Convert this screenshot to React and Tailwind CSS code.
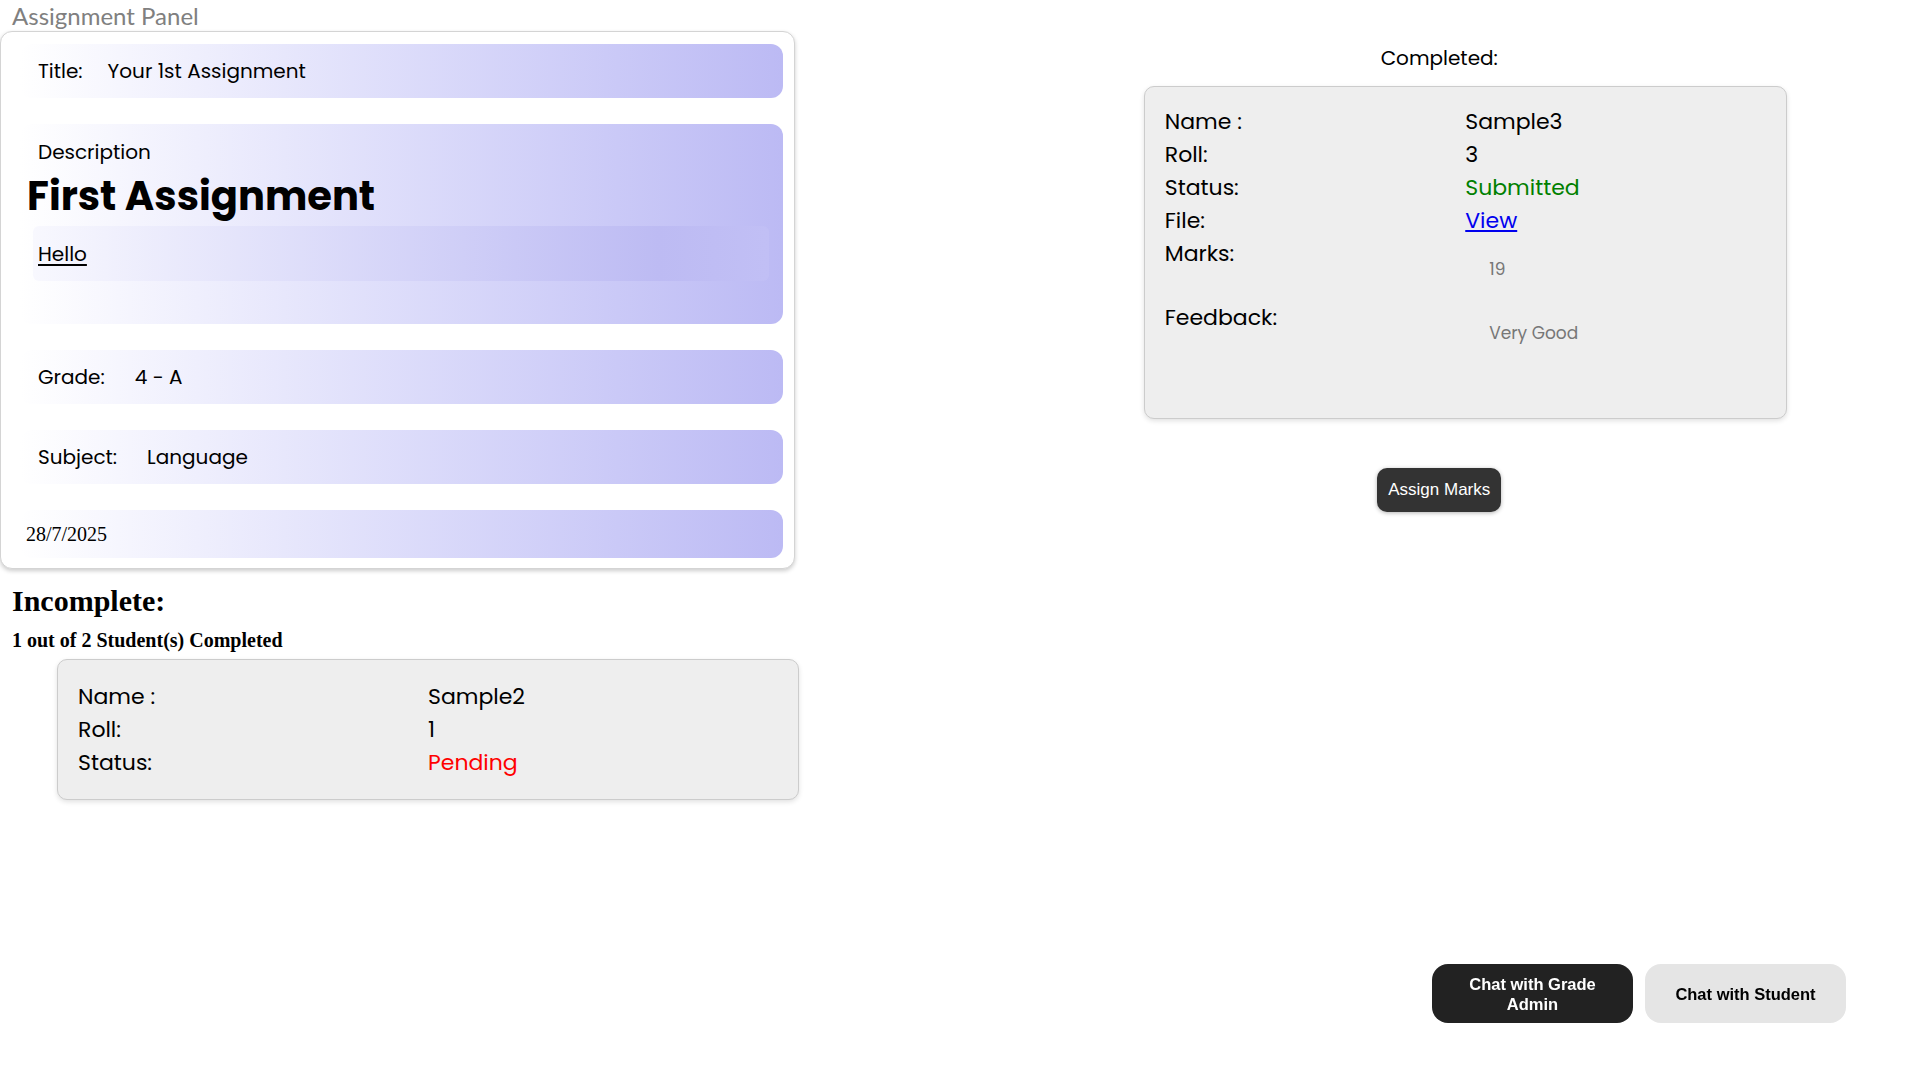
import React from 'react';

export default function App() {
  const incomplete = [
    { label: 'Name :', value: 'Sample2' },
    { label: 'Roll:', value: '1' },
    { label: 'Status:', value: 'Pending', color: 'text-[#ff0000]' },
  ];

  const completed = [
    { label: 'Name :', value: 'Sample3' },
    { label: 'Roll:', value: '3' },
    { label: 'Status:', value: 'Submitted', color: 'text-[#008000]' },
  ];

  return (
    <div className="min-h-screen bg-white flex font-['Poppins','Inter',sans-serif] text-black">
      {/* Left column */}
      <div className="w-1/2 flex flex-col">
        <h2 className="pl-[12px] text-[24px] leading-[31px] text-[#808080] font-['Lato',sans-serif]">Assignment Panel</h2>

        {/* Assignment card */}
        <div className="w-[795px] bg-white border border-[#d4d4d4] rounded-[12px] shadow-[0_2px_4px_rgba(0,0,0,0.2)] pt-[12px] pb-[10px] pl-[19px] pr-[11px] flex flex-col gap-[26px]">
          <div className="h-[54px] rounded-[12px] bg-linear-to-r from-white to-[#bcbaf4] flex items-center pl-[18px] gap-[25px] text-[20px]">
            <span>Title:</span>
            <span>Your 1st Assignment</span>
          </div>

          <div className="h-[200px] rounded-[12px] bg-linear-to-r from-white to-[#bcbaf4] pt-[13px]">
            <p className="pl-[18px] text-[20px] leading-[30px]">Description</p>
            <h1 className="pl-[7px] mt-[2px] text-[40px] leading-[54px] font-bold">First Assignment</h1>
            <div className="mt-[3px] ml-[13px] mr-[14px] h-[55px] rounded-[6px] bg-linear-to-r from-[#f8f8fe] via-[#bdbbf3] via-85% to-[#c1bff5] flex items-center pl-[5px]">
              <span className="text-[20px] underline underline-offset-[3px]">Hello</span>
            </div>
          </div>

          <div className="h-[54px] rounded-[12px] bg-linear-to-r from-white to-[#bcbaf4] flex items-center pl-[18px] gap-[30px] text-[20px]">
            <span>Grade:</span>
            <span>4 - A</span>
          </div>

          <div className="h-[54px] rounded-[12px] bg-linear-to-r from-white to-[#bcbaf4] flex items-center pl-[18px] gap-[30px] text-[20px]">
            <span>Subject:</span>
            <span>Language</span>
          </div>

          <div className="h-[48px] rounded-[12px] bg-linear-to-r from-white to-[#bcbaf4] flex items-center pl-[6px] font-['Liberation_Serif',serif] text-[20px]">
            28/7/2025
          </div>
        </div>

        <h2 className="mt-[15px] pl-[12px] font-['Liberation_Serif',serif] font-bold text-[30px] leading-[34px]">Incomplete:</h2>
        <h4 className="mt-[11px] pl-[12px] font-['Liberation_Serif',serif] font-bold text-[20px] leading-[22px]">1 out of 2 Student(s) Completed</h4>

        <div className="mt-[8px] ml-[57px] w-[742px] bg-[#eeeeee] border border-[#cccccc] rounded-[10px] shadow-[0_2px_5px_rgba(0,0,0,0.12)] py-[20px] px-[20px] grid grid-cols-2 text-[22px] leading-[33px]">
          {incomplete.map((row) => (
            <React.Fragment key={row.label}>
              <span>{row.label}</span>
              <span className={row.color || ''}>{row.value}</span>
            </React.Fragment>
          ))}
        </div>
      </div>

      {/* Right column */}
      <div className="w-1/2 flex flex-col items-center">
        <p className="mt-[43px] text-[20px] leading-[30px]">Completed:</p>

        <div className="mt-[13px] ml-[52px] w-[643px] h-[333px] bg-[#eeeeee] border border-[#cccccc] rounded-[10px] shadow-[0_2px_5px_rgba(0,0,0,0.12)] pt-[18px] px-[20px] grid grid-cols-2 content-start text-[22px] leading-[33px]">
          {completed.map((row) => (
            <React.Fragment key={row.label}>
              <span>{row.label}</span>
              <span className={row.color || ''}>{row.value}</span>
            </React.Fragment>
          ))}
          <span>File:</span>
          <span><a href="#" className="text-[#0000ee] underline">View</a></span>
          <span className="h-[64px]">Marks:</span>
          <span className="h-[64px] pt-[23px] pl-[24px] text-[17px] leading-[18px] text-[#777777]">19</span>
          <span>Feedback:</span>
          <span className="pt-[23px] pl-[24px] text-[17px] leading-[18px] text-[#777777]">Very Good</span>
        </div>

        <button className="mt-[49px] w-[124px] h-[44px] bg-[#333333] text-white rounded-[10px] shadow-[0_1px_4px_rgba(0,0,0,0.3)] font-['Liberation_Sans',Arial,sans-serif] text-[17px]">
          Assign Marks
        </button>
      </div>

      {/* Floating chat buttons */}
      <div className="fixed right-[73px] bottom-[56px] flex gap-[12px] font-['Liberation_Sans',Arial,sans-serif]">
        <button className="w-[201px] h-[59px] px-[24px] rounded-[16px] bg-[#222222] text-white font-bold text-[16.5px] leading-[20px]">
          Chat with Grade Admin
        </button>
        <button className="w-[201px] h-[59px] px-[24px] rounded-[16px] bg-[#e5e5e5] text-black font-bold text-[16.5px] leading-[20px]">
          Chat with Student
        </button>
      </div>
    </div>
  );
}
